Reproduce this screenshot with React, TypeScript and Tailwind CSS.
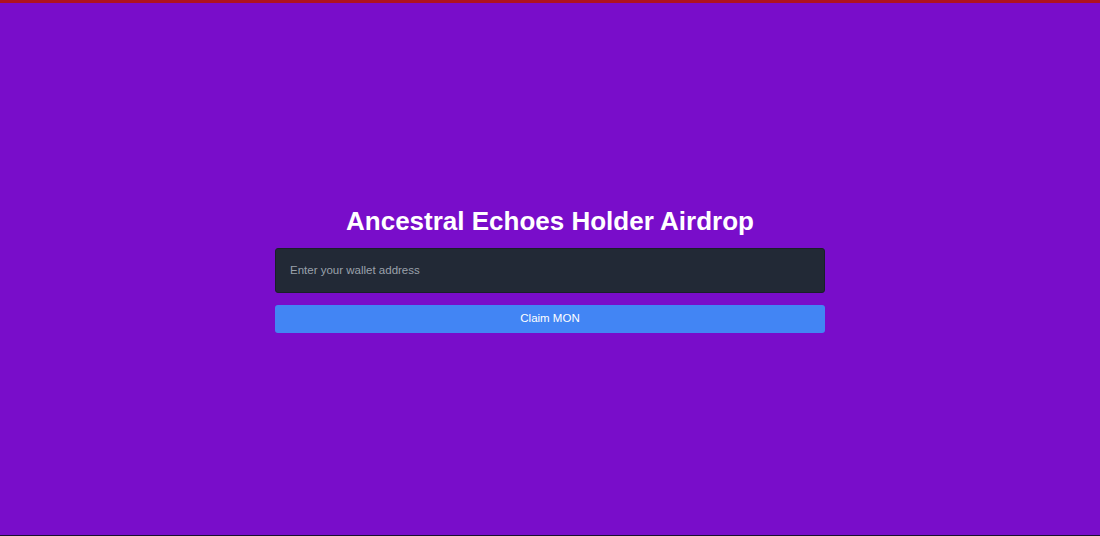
import React, { useState } from 'react';

export default function App() {
  const [address, setAddress] = useState('');

  return (
    <div
      className="min-h-screen flex items-center justify-center bg-[#790dca] border-t-[3px] border-t-[#b0121e] border-b border-b-[#1a1030]"
      style={{ fontFamily: '"Liberation Sans", Arial, sans-serif' }}
    >
      <div className="w-[550px] flex flex-col items-center">
        <h1 className="text-[26px] leading-[30px] font-bold text-white mb-[12px]">Ancestral Echoes Holder Airdrop</h1>
        <input
          type="text"
          value={address}
          onChange={(e) => setAddress(e.target.value)}
          placeholder="Enter your wallet address"
          className="w-full h-[45px] px-[14px] rounded-[3px] bg-[#222936] border border-[#1a1f2a] text-[11.5px] text-white placeholder-[#9aa1ab] outline-none"
        />
        <button className="w-full h-[28px] mt-3 rounded-[3px] bg-[#4285f4] text-white text-[11.5px]">
          Claim MON
        </button>
      </div>
    </div>
  );
}
